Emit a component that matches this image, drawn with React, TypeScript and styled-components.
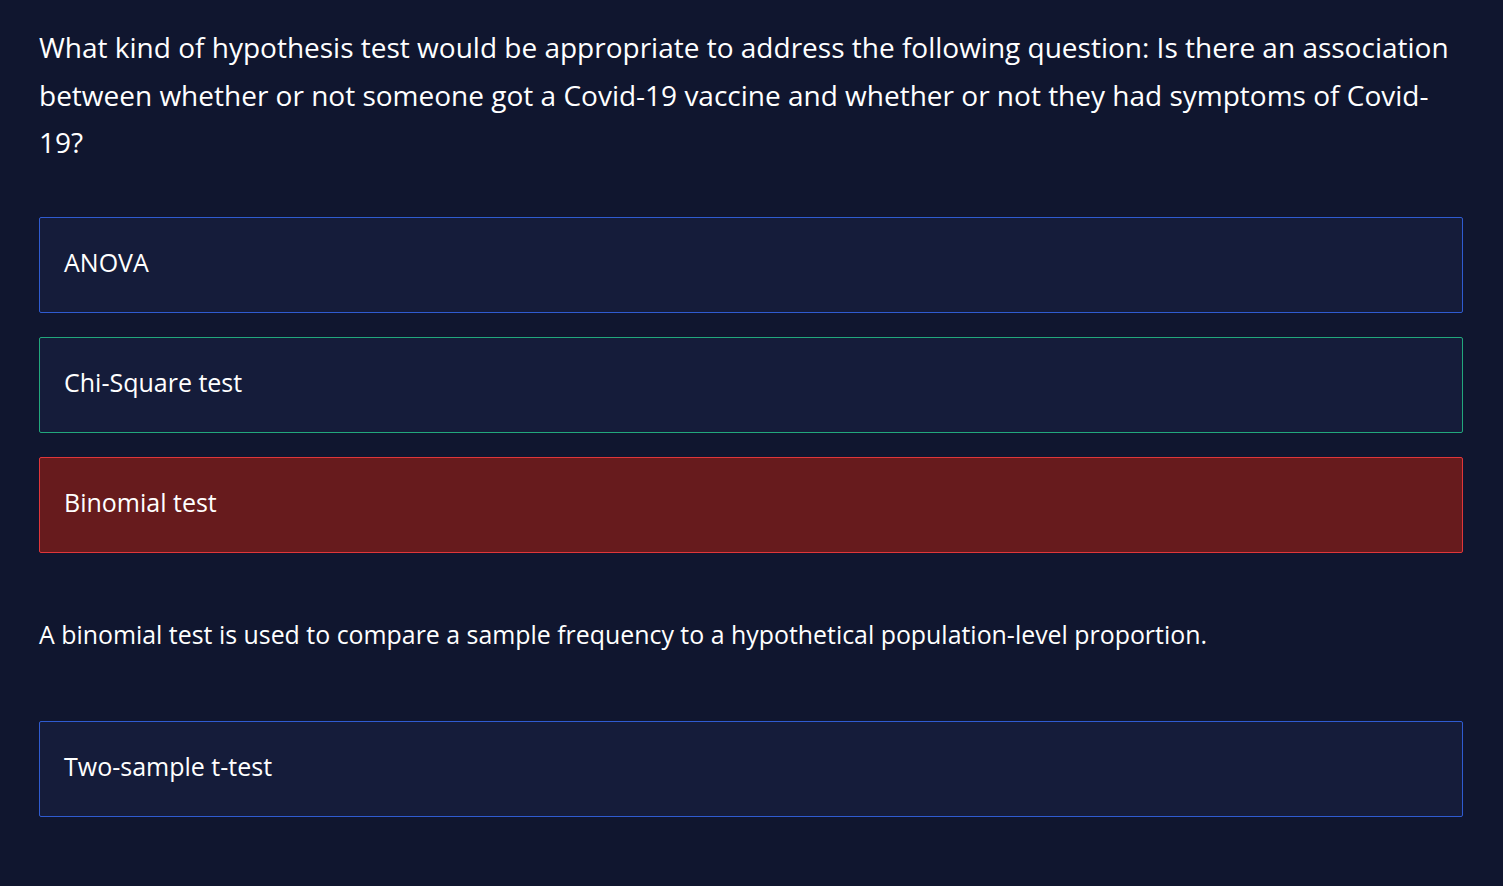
import React from "react";
import { createGlobalStyle, styled } from "styled-components";

const GlobalStyles = createGlobalStyle({
  "html, body": {
    margin: 0,
    padding: 0,
    background: "#10162f",
  },
  body: {
    fontFamily: "'Open Sans', Lato, sans-serif",
    color: "#ffffff",
  },
});

type Status = "neutral" | "correct" | "wrong";

const borderColors: Record<Status, string> = {
  neutral: "#2f5bd0",
  correct: "#22a77c",
  wrong: "#e0363a",
};

const backgrounds: Record<Status, string> = {
  neutral: "#151c3a",
  correct: "#151c3a",
  wrong: "#671b1d",
};

const StyledPage = styled("div")({
  padding: "24px 40px 40px 39px",
  display: "flex",
  flexDirection: "column",
});

const StyledQuestion = styled("p")({
  margin: 0,
  fontSize: 28,
  lineHeight: "47.5px",
});

const StyledOptions = styled("div")({
  display: "flex",
  flexDirection: "column",
  gap: 24,
  marginTop: 50,
});

const StyledOption = styled("div")<{ $status: Status }>(({ $status }) => ({
  height: 96,
  boxSizing: "border-box",
  display: "flex",
  alignItems: "center",
  padding: "0 24px 6px",
  border: `1px solid ${borderColors[$status]}`,
  borderRadius: 2,
  background: backgrounds[$status],
  fontSize: 25,
  color: "#ffffff",
}));

const StyledFeedback = styled("p")({
  margin: "65px 0 71px 0",
  fontSize: 24.9,
  lineHeight: "32px",
});

const options: { label: string; status: Status }[] = [
  { label: "ANOVA", status: "neutral" },
  { label: "Chi-Square test", status: "correct" },
  { label: "Binomial test", status: "wrong" },
];

export default function App() {
  return (
    <StyledPage>
      <GlobalStyles />
      <StyledQuestion>
        What kind of hypothesis test would be appropriate to address the following question: Is there an association
        between whether or not someone got a Covid-19 vaccine and whether or not they had symptoms of Covid-19?
      </StyledQuestion>
      <StyledOptions>
        {options.map((o) => (
          <StyledOption key={o.label} $status={o.status}>
            {o.label}
          </StyledOption>
        ))}
      </StyledOptions>
      <StyledFeedback>
        A binomial test is used to compare a sample frequency to a hypothetical population-level proportion.
      </StyledFeedback>
      <StyledOption $status="neutral">Two-sample t-test</StyledOption>
    </StyledPage>
  );
}
